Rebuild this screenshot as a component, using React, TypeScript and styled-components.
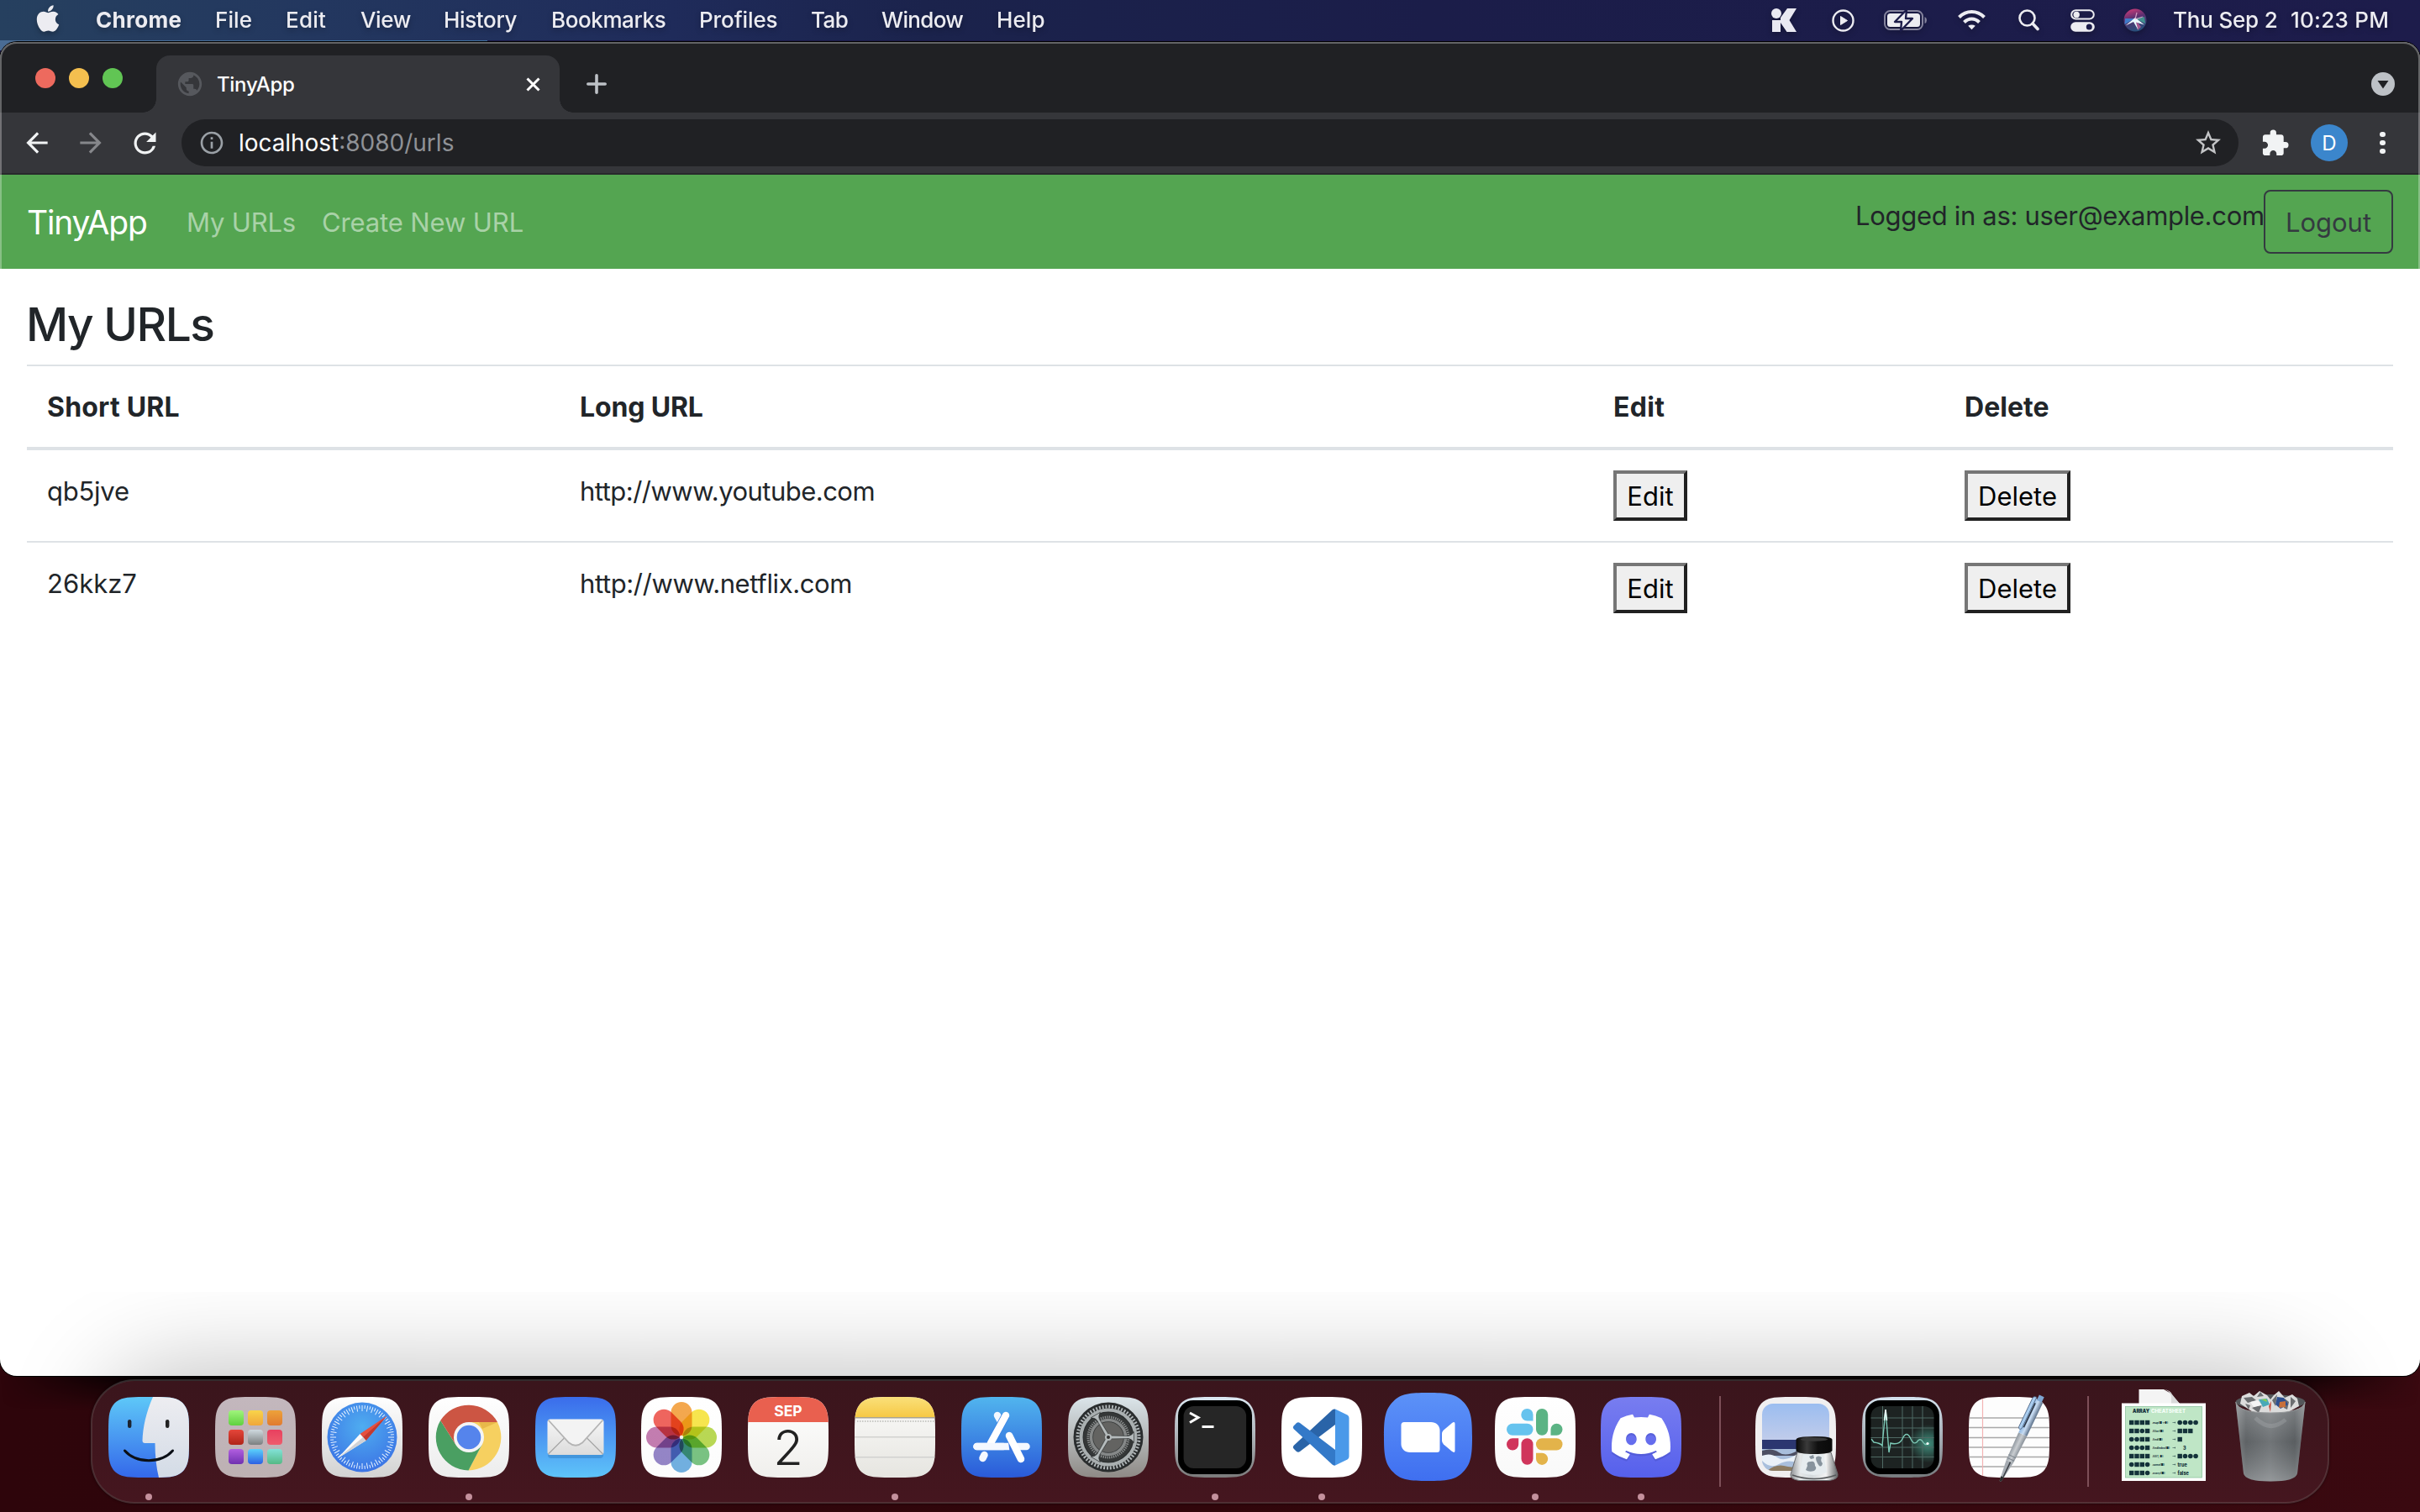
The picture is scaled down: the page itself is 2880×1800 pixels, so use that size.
import React from "react";
import styled, { createGlobalStyle, css } from "styled-components";
import { FaApple } from "react-icons/fa";
import { SiDiscord } from "react-icons/si";
import {
  MdArrowBack,
  MdArrowForward,
  MdRefresh,
  MdInfoOutline,
  MdStarBorder,
  MdExtension,
  MdPublic,
} from "react-icons/md";

const GlobalStyle = createGlobalStyle`
  *, *::before, *::after { box-sizing: border-box; }
  html, body { margin: 0; padding: 0; }
  body {
    width: 2880px;
    height: 1800px;
    overflow: hidden;
    font-family: Inter, "Liberation Sans", sans-serif;
    -webkit-font-smoothing: antialiased;
  }
`;

/* ---------- Desktop ---------- */

const Desktop = styled.div`
  width: 2880px;
  height: 1800px;
  display: flex;
  flex-direction: column;
  overflow: hidden;
  background:
    linear-gradient(90deg, #4a6c94 0, #3f6f9f 580px, transparent 580px) 0 0 / 100% 60px no-repeat,
    linear-gradient(#1d1b4a, #1d1b4a) 0 0 / 100% 100px no-repeat,
    linear-gradient(90deg, #2e050b 0%, #30060b 50%, #3a0910 100%);
`;

/* Text whose letter spacing is tuned per use */
const Label = styled.span<{ $size: number; $weight?: number; $track?: number; $color?: string }>`
  font-size: ${(p) => p.$size}px;
  font-weight: ${(p) => p.$weight ?? 400};
  letter-spacing: ${(p) => p.$track ?? 0}px;
  ${(p) => p.$color && css`color: ${p.$color};`}
  white-space: pre;
`;

/* ---------- Menu bar ---------- */

const MenuBar = styled.header`
  flex: none;
  height: 48px;
  display: flex;
  align-items: center;
  padding-left: 39px;
  color: #ececf1;
  background: linear-gradient(90deg, #26405f 0, #23375f 380px, #1f2b5a 800px, #1b234c 1100px, #1b1d49 1700px, #1d1c4b 2880px);
  svg, span { filter: drop-shadow(0 3px 3px rgba(0, 0, 0, 0.25)); }
`;

const AppleSlot = styled.div`
  width: 75px;
  height: 48px;
  display: flex;
  align-items: center;
  padding-bottom: 4px;
`;

const MenuItem = styled.div<{ $slot: number }>`
  width: ${(p) => p.$slot}px;
  height: 48px;
  padding-bottom: 1px;
  display: flex;
  align-items: center;
`;

const StatusArea = styled.div`
  margin-left: auto;
  display: flex;
  align-items: center;
`;

const StatusSlot = styled.div<{ $slot: number }>`
  width: ${(p) => p.$slot}px;
  height: 48px;
  display: flex;
  align-items: center;
  svg { display: block; overflow: visible; }
`;

const menus: { text: string; slot: number; weight?: number; track: number }[] = [
  { text: "Chrome", slot: 142, weight: 700, track: 0.3 },
  { text: "File", slot: 84, track: 0.1 },
  { text: "Edit", slot: 89, track: 0.2 },
  { text: "View", slot: 99, track: -0.4 },
  { text: "History", slot: 128, track: -0.35 },
  { text: "Bookmarks", slot: 176, track: -0.4 },
  { text: "Profiles", slot: 133, track: -0.1 },
  { text: "Tab", slot: 84, track: -0.6 },
  { text: "Window", slot: 137, track: -0.65 },
  { text: "Help", slot: 80, track: 0.1 },
];

/* ---------- Browser window ---------- */

const Window = styled.section`
  flex: none;
  position: relative;
  margin-top: 2px;
  height: 1588px;
  display: flex;
  flex-direction: column;
  border-radius: 20px;
  background: #fff;
  overflow: hidden;
  box-shadow: 0 0 0 1px #000;
  &::after {
    content: "";
    position: absolute;
    inset: 0;
    border-radius: 20px;
    border: 2px solid rgba(255, 255, 255, 0.3);
    border-bottom: 0;
    pointer-events: none;
  }
`;

const WindowShadow = styled.div`
  flex: none;
  height: 40px;
  background: linear-gradient(90deg, rgba(0,0,0,0) 0, #000 160px, #000 2700px, rgba(0,0,0,0) 2880px);
  mask-image: linear-gradient(#000, transparent);
  opacity: 0.9;
`;

const TabStrip = styled.div`
  flex: none;
  height: 84px;
  display: flex;
  align-items: flex-end;
  background: #202124;
`;

const TrafficLights = styled.div`
  width: 186px;
  height: 82px;
  padding: 0 0 0 42px;
  display: flex;
  gap: 16px;
  align-items: center;
`;

const Light = styled.i<{ $color: string }>`
  width: 24px;
  height: 24px;
  border-radius: 50%;
  background: ${(p) => p.$color};
`;

const Tab = styled.div`
  position: relative;
  width: 480px;
  height: 68px;
  padding: 0 23px;
  display: flex;
  align-items: center;
  background: #35363a;
  border-radius: 16px 16px 0 0;
  color: #fff;
  &::before, &::after {
    content: "";
    position: absolute;
    bottom: 0;
    width: 16px;
    height: 16px;
  }
  &::before { left: -16px; background: radial-gradient(circle at 0 0, transparent 15.5px, #35363a 16px); }
  &::after { right: -16px; background: radial-gradient(circle at 100% 0, transparent 15.5px, #35363a 16px); }
`;

const TabTitle = styled.div`
  flex: 1;
  padding-left: 15px;
  display: flex;
`;

const NewTab = styled.div`
  height: 68px;
  padding-left: 32px;
  display: flex;
  align-items: center;
`;

const TabSearch = styled.div`
  height: 68px;
  margin-left: auto;
  padding-right: 30px;
  display: flex;
  align-items: center;
`;

const Toolbar = styled.div`
  flex: none;
  height: 74px;
  display: flex;
  align-items: center;
  background: #35363a;
  border-bottom: 2px solid #28292c;
`;

const NavButtons = styled.div`
  width: 216px;
  padding-left: 25px;
  display: flex;
  align-items: center;
  gap: 26px;
  svg { display: block; }
`;

const AddressBar = styled.div`
  width: 2448px;
  height: 56px;
  padding: 0 18px 0 20px;
  display: flex;
  align-items: center;
  border-radius: 28px;
  background: #202124;
`;

const AddressText = styled.div`
  flex: 1;
  padding-left: 16px;
`;

const ToolbarActions = styled.div`
  flex: 1;
  display: flex;
  align-items: center;
  padding-left: 26px;
`;

const Avatar = styled.div`
  width: 44px;
  height: 44px;
  margin-left: 25px;
  display: flex;
  align-items: center;
  justify-content: center;
  border-radius: 50%;
  background: #3b86cc;
`;

const Kebab = styled.div`
  margin-left: 38px;
  display: flex;
  flex-direction: column;
  gap: 3.5px;
  i { width: 6.6px; height: 6.6px; border-radius: 50%; background: #f1f3f4; }
`;

/* ---------- Page ---------- */

const Navbar = styled.nav`
  flex: none;
  height: 112px;
  padding: 0 32px;
  display: flex;
  align-items: center;
  background: #54a551;
`;

const Brand = styled.div`
  width: 190px;
`;

const NavLink = styled.div<{ $slot: number }>`
  width: ${(p) => p.$slot}px;
`;

const Account = styled.div`
  margin-left: auto;
  width: 640px;
  height: 76px;
  display: flex;
  color: #212529;
`;

const AccountText = styled.div`
  width: 486px;
  line-height: 62px;
`;

const LogoutButton = styled.button`
  width: 154px;
  height: 76px;
  padding: 0;
  font-family: inherit;
  color: #343a40;
  background: transparent;
  border: 2px solid #343a40;
  border-radius: 8px;
`;

const Main = styled.main`
  flex: 1;
  padding: 32px;
  color: #212529;
`;

const Heading = styled.h3`
  margin: 0 0 16px -1px;
  height: 66px;
  line-height: 69px;
  font-size: 55px;
  font-weight: 500;
`;

const Table = styled.table`
  width: 2816px;
  table-layout: fixed;
  border-spacing: 0;
  border-collapse: separate;
`;

const HeadCell = styled.th<{ $width: number }>`
  width: ${(p) => p.$width}px;
  height: 102px;
  padding: 25px 24px 23px;
  font-size: 32px;
  line-height: 48px;
  text-align: left;
  vertical-align: top;
  border-top: 2px solid #dee2e6;
  border-bottom: 4px solid #dee2e6;
`;

const Cell = styled.td<{ $ruled: boolean; $action?: boolean }>`
  padding: ${(p) => (p.$action ? "24px" : "25px 24px 23px")};
  font-size: 31px;
  line-height: 48px;
  vertical-align: top;
  border-top: ${(p) => (p.$ruled ? "2px solid #dee2e6" : "0")};
`;

const RowButton = styled.button<{ $width: number }>`
  display: block;
  width: ${(p) => p.$width}px;
  height: 60px;
  padding: 0;
  font-family: inherit;
  color: #000;
  background: #efefef;
  border: 4px solid;
  border-color: #767676 #212121 #212121 #767676;
`;

/* ---------- Dock ---------- */

const Dock = styled.footer`
  flex: none;
  position: relative;
  width: 2664px;
  height: 148px;
  margin: -36px 0 0 108px;
  padding: 0 3.5px;
  display: flex;
  border-radius: 52px;
  border: 2px solid rgba(255, 255, 255, 0.17);
  background: linear-gradient(#3a151c, #45161f);
  background-clip: padding-box;
  background-color: #3a141b;
  box-shadow: 0 0 3px rgba(0, 0, 0, 0.5);
`;

/* Soft shade the dock casts on the page above it */
const DockShade = styled.div`
  position: absolute;
  left: 0;
  bottom: 0;
  width: 2880px;
  height: 100px;
  overflow: hidden;
  pointer-events: none;
  &::before {
    content: "";
    position: absolute;
    left: 140px;
    right: 140px;
    top: 108px;
    height: 140px;
    border-radius: 60px;
    box-shadow: 0 0 120px 12px rgba(0, 0, 0, 0.27);
  }
`;

const DockItem = styled.div`
  position: relative;
  width: 126.9px;
  height: 144px;
  padding-top: 19px;
  display: flex;
  flex-direction: column;
  align-items: center;
  svg { display: block; flex: none; overflow: visible; }
`;

const RunningDot = styled.i`
  position: absolute;
  bottom: 2px;
  width: 8px;
  height: 8px;
  border-radius: 50%;
  background: #c4919d;
`;

const Divider = styled.div`
  width: 57px;
  height: 126px;
  padding: 18px 0 0 29px;
  &::before {
    content: "";
    display: block;
    width: 2px;
    height: 108px;
    background: #7d4f58;
  }
`;

/* Icons taller than the grid tile rise above its top edge */
const Lifted = styled.div<{ $by: number }>`
  margin-top: -${(p) => p.$by}px;
  display: flex;
`;

/* ---------- Dock icons ---------- */

const Squircle =
  "M48 0C66 0 76 0 83 3.5C89 6.500 92 11 94 17C96 23 96 33 96 48C96 63 96 73 94 79C92 85 89 89.500 83 92.500C76 96 66 96 48 96C30 96 20 96 13 92.500C7 89.500 4 85 2 79C0 73 0 63 0 48C0 33 0 23 2 17C4 11 7 6.500 13 3.500C20 0 30 0 48 0Z";

type TileProps = { id: string; from: string; to: string; children?: React.ReactNode };

const Tile = ({ id, from, to, children }: TileProps) => (
  <svg width="96" height="96" viewBox="0 0 96 96">
    <defs>
      <linearGradient id={`${id}-bg`} x1="0" y1="0" x2="0" y2="1">
        <stop offset="0" stopColor={from} />
        <stop offset="1" stopColor={to} />
      </linearGradient>
      <clipPath id={`${id}-clip`}>
        <path d={Squircle} />
      </clipPath>
    </defs>
    <g clipPath={`url(#${id}-clip)`}>
      <rect width="96" height="96" fill={`url(#${id}-bg)`} />
      {children}
    </g>
  </svg>
);

const FinderIcon = () => (
  <Tile id="finder" from="#5ec8f8" to="#3468ea">
    <linearGradient id="finder-r" x1="0" y1="0" x2="0" y2="1">
      <stop offset="0" stopColor="#ededf1" />
      <stop offset="1" stopColor="#d3dbe6" />
    </linearGradient>
    <path d="M53 0C45 18 41 36 40.500 52Q40.500 55 43.500 55H55.500C55.500 70 57 84 60 96H96V0Z" fill="url(#finder-r)" />
    <rect x="23" y="27" width="4.400" height="10" rx="2.200" fill="#1c2430" />
    <rect x="68" y="27" width="4.400" height="10" rx="2.200" fill="#222" />
    <path d="M19.500 64C33 79.500 63 79.500 76.500 64" fill="none" stroke="#0b0f16" strokeWidth="3" strokeLinecap="round" />
  </Tile>
);

const launchColors = [
  ["#a0f47c", "#5fd13f"], ["#f8d44a", "#f0a63a"], ["#eda23a", "#e07a30"],
  ["#e5463a", "#b02318"], ["#cfdadf", "#7b7f80"], ["#e8405f", "#ee5c6c"],
  ["#b25fe0", "#7030b0"], ["#5ad2fb", "#2c5fe4"], ["#82e2d8", "#55b985"],
];

const LaunchpadIcon = () => (
  <Tile id="launch" from="#c3b7bd" to="#bdb1b3">
    {launchColors.map(([a, b], i) => (
      <g key={i}>
        <linearGradient id={`launch-${i}`} x1="0" y1="0" x2="0" y2="1">
          <stop offset="0" stopColor={a} />
          <stop offset="1" stopColor={b} />
        </linearGradient>
        <rect x={16 + (i % 3) * 23} y={16 + Math.floor(i / 3) * 23} width="18" height="18" rx="4" fill={`url(#launch-${i})`} />
      </g>
    ))}
  </Tile>
);

const SafariIcon = () => (
  <Tile id="safari" from="#ffffff" to="#d2d2d2">
    <radialGradient id="safari-d" cx="0.5" cy="0.35" r="0.7">
      <stop offset="0" stopColor="#4fadf0" />
      <stop offset="1" stopColor="#3a70e4" />
    </radialGradient>
    <circle cx="48" cy="48" r="41.500" fill="url(#safari-d)" />
    {Array.from({ length: 72 }, (_, i) => (
      <line key={i} x1="48" y1="10" x2="48" y2={i % 2 ? 14 : 17} stroke="#e8f3ff" strokeWidth="1" transform={`rotate(${i * 5} 48 48)`} />
    ))}
    <path d="M77.500 22.500L45.500 44L52.500 52Z" fill="#e5503f" />
    <path d="M77.500 22.500L49 48L52.500 52Z" fill="#c23a30" />
    <path d="M19 73L45.500 44L52.500 52Z" fill="#fbfbfb" />
    <path d="M19 73L49 48L52.500 52Z" fill="#d0d2d6" />
  </Tile>
);

const ChromeIcon = () => (
  <Tile id="chrome" from="#ffffff" to="#ececec">
    <path d="M48 48L14.200 28A39.500 39.500 0 0 1 82 30H48Z" fill="#cc5543" />
    <path d="M48 30H82A39.500 39.500 0 0 1 47.500 87.500L63.500 57Z" fill="#f6d060" />
    <path d="M14.200 28A39.500 39.500 0 0 0 47.500 87.500L63.500 57L32.500 57Z" fill="#4a9f62" />
    <path d="M14.200 28L32.500 57L40 40L48 30Z" fill="#cc5543" />
    <path d="M60 30H82L64 38Z" fill="#e0a93c" opacity=".6" />
    <circle cx="48" cy="48" r="18" fill="#f5f5f5" />
    <circle cx="48" cy="48" r="14.300" fill="#5584ec" />
  </Tile>
);

const MailIcon = () => (
  <Tile id="mail" from="#3a6ceb" to="#5ec4f9">
    <linearGradient id="mail-e" x1="0" y1="0" x2="0" y2="1">
      <stop offset="0" stopColor="#f6f6f6" />
      <stop offset="1" stopColor="#dcdcdc" />
    </linearGradient>
    <rect x="15" y="30" width="66" height="43" rx="4" fill="#2f7fc4" opacity=".5" />
    <rect x="14.500" y="26.500" width="67" height="42.500" rx="3.500" fill="url(#mail-e)" />
    <path d="M15.500 68L34.500 49M80.500 68L61.500 49" stroke="#a5a5a5" strokeWidth="1.200" />
    <path d="M15.500 27.500L40 54.500Q48 61 56 54.500L80.500 27.500" fill="#f3f3f3" stroke="#b4b4b4" strokeWidth="1.800" />
  </Tile>
);

const petals = ["#f3a13f", "#f7e43f", "#b4d645", "#6fbf78", "#66abe0", "#8c7cc4", "#bf72aa", "#ee5850"];

const Petal = styled.rect`
  mix-blend-mode: multiply;
`;

const PhotosIcon = () => (
  <Tile id="photos" from="#ffffff" to="#fcfcfc">
    {petals.map((c, i) => (
      <Petal key={c} x="35.500" y="6" width="25" height="40.500" rx="12.500" fill={c} opacity=".92" transform={`rotate(${i * 45} 48 48)`} />
    ))}
    <circle cx="48" cy="48" r="2.200" fill="#f3ede0" />
  </Tile>
);

const CalendarIcon = () => (
  <Tile id="cal" from="#ffffff" to="#f0efec">
    <rect width="96" height="30" fill="#e9604f" />
    <text x="48" y="22.800" textAnchor="middle" fontSize="17.500" fontWeight="700" fill="#fff">SEP</text>
    <text x="48" y="80.500" textAnchor="middle" fontSize="58" fontWeight="300" fill="#222">2</text>
  </Tile>
);

const NotesIcon = () => (
  <Tile id="notes" from="#fbfbfa" to="#e6e5e0">
    <linearGradient id="notes-y" x1="0" y1="0" x2="0" y2="1">
      <stop offset="0" stopColor="#fae07a" />
      <stop offset="1" stopColor="#f6c844" />
    </linearGradient>
    <rect width="96" height="24.500" fill="url(#notes-y)" />
    <rect y="24" width="96" height="1.500" fill="#aaa48f" />
    <line x1="3" x2="96" y1="29" y2="29" stroke="#b9b9b6" strokeWidth="1.500" strokeDasharray="1.500 1.500" />
    <rect y="47" width="96" height="1.500" fill="#d2d2d0" />
    <rect y="71" width="96" height="1.500" fill="#d2d2d0" />
  </Tile>
);

const AppStoreIcon = () => (
  <Tile id="store" from="#51b5ee" to="#2a5ad9">
    <g stroke="#f4f8ff" strokeWidth="8.500" strokeLinecap="round">
      <line x1="43" y1="22" x2="48" y2="31" />
      <line x1="18.500" y1="59" x2="77.500" y2="59" />
      <line x1="27.500" y1="69" x2="25.500" y2="73" />
    </g>
    <path d="M55.500 50L65 68L58 68Z" fill="#3a77e2" />
    <line x1="57" y1="46" x2="71" y2="74" stroke="#fff" strokeWidth="8.500" strokeLinecap="round" />
    <line x1="53" y1="22" x2="35" y2="55" stroke="#3d86e6" strokeWidth="10" />
    <line x1="53" y1="22" x2="35" y2="55" stroke="#fff" strokeWidth="8.500" strokeLinecap="round" />
    <line x1="18.500" y1="59" x2="50" y2="59" stroke="#f4f8ff" strokeWidth="8.500" strokeLinecap="round" />
  </Tile>
);

const SettingsIcon = () => (
  <Tile id="set" from="#dbe5ea" to="#8e8a86">
    <circle cx="48" cy="48" r="41.500" fill="#2a2d2e" />
    <circle cx="48" cy="48" r="36.500" fill="none" stroke="#b0b6b8" strokeWidth="4" strokeDasharray="1.900 1.922" />
    <circle cx="48" cy="48" r="32.500" fill="none" stroke="#a9afb0" strokeWidth="4" />
    <circle cx="48" cy="48" r="29.500" fill="#343737" />
    <circle cx="48" cy="48" r="24" fill="none" stroke="#8d9090" strokeWidth="3" strokeDasharray="1.300 1.213" />
    <circle cx="48" cy="48" r="20.500" fill="none" stroke="#858888" strokeWidth="3.500" />
    <circle cx="48" cy="48" r="18" fill="#636361" />
    {[0, 120, 240].map((a) => (
      <path key={a} d="M48 46L72 46.500Q76 46 78.500 41.500V54.500Q76 50 72 49.500L48 50Z" fill="#b4babb" stroke="#2d3030" strokeWidth=".6" transform={`rotate(${a} 48 48)`} />
    ))}
    <circle cx="48" cy="48" r="4" fill="#b4babb" />
    <circle cx="48" cy="48" r="2" fill="#333" />
  </Tile>
);

const TerminalIcon = () => (
  <Tile id="term" from="#dce8f2" to="#7b7b7b">
    <rect x="4" y="4" width="88" height="88" rx="18" fill="#000" />
    <rect x="10.600" y="11" width="74.500" height="74" rx="12" fill="#262626" />
    <path d="M18 19L28 24.500L18 30.500" fill="none" stroke="#fff" strokeWidth="3" />
    <rect x="32.500" y="34" width="14" height="3" fill="#fff" />
  </Tile>
);

const CodeIcon = () => (
  <Tile id="code" from="#ffffff" to="#ffffff">
    <path d="M14.500 58Q13 60 14.500 61.500L18 65Q20 66.500 22 65L64 33V14.500Q62 14 60.500 15.500Z" fill="#2a64a8" />
    <path d="M14.500 38Q13 36 14.500 34.500L18 31Q20 29.500 22 31L64 63V81.500Q62 82 60.500 80.500Z" fill="#3379c8" />
    <path d="M64 14.500L78.500 21.500Q80.500 22.500 80.500 25V71Q80.500 73.500 78.500 74.500L64 81.500Z" fill="#4a99e9" />
  </Tile>
);

const ZoomIcon = () => (
  <svg width="105" height="105" viewBox="0 0 105 105">
    <linearGradient id="zoom-bg" x1="0" y1="0" x2="0" y2="1">
      <stop offset="0" stopColor="#5c92f8" />
      <stop offset="1" stopColor="#3f6ff0" />
    </linearGradient>
    <path d="M52.500 0C74 0 85 1 94 10.500C104 20 105 32 105 52.500C105 73 104 85 94 94.500C85 104 74 105 52.500 105C31 105 20 104 11 94.500C1 85 0 73 0 52.500C0 32 1 20 11 10.500C20 1 31 0 52.500 0Z" fill="url(#zoom-bg)" />
    <path d="M24 35H56C62 35 66.500 39 66.500 45V67.500Q66.500 71 63 71H31C25 71 20.500 67 20.500 61V38.500Q20.500 35 24 35Z" fill="#fff" />
    <path d="M69 49Q69 46.500 71 44.500L80.500 36.500Q84.500 33.500 84.500 37V69Q84.500 72.500 80.500 69.500L71 61.500Q69 59.500 69 57Z" fill="#fff" />
  </svg>
);

const SlackIcon = () => (
  <Tile id="slack" from="#ffffff" to="#f9f9f9">
    <path d="M38.500 14A7 7 0 0 1 45.500 21V28.500H38.500A7.200 7.200 0 0 1 38.500 14Z" fill="#66c3ee" />
    <rect x="14" y="31.700" width="31.500" height="14" rx="7" fill="#66c3ee" />
    <rect x="49" y="14" width="14.200" height="31.700" rx="7" fill="#5bb384" />
    <path d="M80.500 38.700A7 7 0 0 1 73.500 45.700H66.500V38.700A7 7 0 0 1 80.500 38.700Z" fill="#5bb384" />
    <path d="M28.200 49.300V56.500A7.100 7.100 0 1 1 21 49.300Z" fill="#d0355b" />
    <rect x="31.500" y="49.300" width="14" height="31.500" rx="7" fill="#d0355b" />
    <rect x="49" y="49.300" width="31.500" height="14.300" rx="7" fill="#e3b34a" />
    <path d="M49 66.700H56A7.100 7.100 0 1 1 49 73.800Z" fill="#e3b34a" />
  </Tile>
);

const DiscordIcon = () => (
  <Tile id="disc" from="#787df0" to="#5660ec">
    <SiDiscord x="13" y="15" size={70} color="#3f47b8" opacity={0.35} />
    <SiDiscord x="13" y="12.500" size={70} color="#ffffff" />
  </Tile>
);

const PreviewIcon = () => (
  <svg width="96" height="96" viewBox="0 0 96 96">
    <defs>
      <clipPath id="pv"><rect x="8" y="8" width="80" height="80" rx="13" /></clipPath>
      <linearGradient id="pv-sky" x1="0" y1="0" x2="0" y2="1">
        <stop offset="0" stopColor="#9bbdf0" />
        <stop offset="1" stopColor="#c3cdea" />
      </linearGradient>
      <linearGradient id="pv-glass" x1="0" y1="0" x2="1" y2="0">
        <stop offset="0" stopColor="#8d9093" />
        <stop offset=".2" stopColor="#e4e7e8" />
        <stop offset=".45" stopColor="#d3d9dc" />
        <stop offset=".75" stopColor="#f3f3f3" />
        <stop offset="1" stopColor="#606365" />
      </linearGradient>
      <linearGradient id="pv-cap" x1="0" y1="0" x2="1" y2="0">
        <stop offset="0" stopColor="#090909" />
        <stop offset=".3" stopColor="#3a3a3a" />
        <stop offset=".6" stopColor="#101010" />
        <stop offset="1" stopColor="#0a0a0a" />
      </linearGradient>
    </defs>
    <path d={Squircle} fill="#f0eff0" />
    <g clipPath="url(#pv)">
      <rect x="8" y="8" width="80" height="46" fill="url(#pv-sky)" />
      <rect x="8" y="51" width="80" height="14" fill="#2b3670" />
      <rect x="8" y="62" width="80" height="26" fill="#a9bfdc" />
      <path d="M8 64Q20 60 28 66T50 64V70H8Z" fill="#4d4f62" />
      <path d="M8 70Q18 66 26 72T50 68V78Q38 74 28 80T8 76Z" fill="#eaf1f8" />
      <path d="M14 88Q24 80 34 82T50 84V88Z" fill="#8d7c62" />
    </g>
    <path d="M50 66L42 92Q41 98 52 99.500H88Q99 98 98 92L90 66Z" fill="url(#pv-glass)" stroke="#6b6d70" strokeWidth="1" />
    <path d="M57 68L53 90Q70 96 85 90L81 68Z" fill="#e6ecef" />
    <path d="M62 82Q60 77 66 77Q71 76 71 82Q74 85 70 88Q64 90 60 87ZM72 72Q75 69 79 72Q77 76 80 79Q79 84 76 82Q72 77 72 72ZM64 71L69 69L70 73L66 74Z" fill="#87939d" />
    <path d="M44 93Q70 102 96 93" stroke="#55585a" strokeWidth="1.500" fill="none" />
    <path d="M48.500 51Q48.500 47 70 47T91.500 51V64Q89 68 70 68T48.500 64Z" fill="url(#pv-cap)" />
    <ellipse cx="70" cy="50.500" rx="16" ry="2.200" fill="#3a3a3a" />
  </svg>
);

const ActivityIcon = () => (
  <Tile id="act" from="#d4e2ee" to="#777b7e">
    <rect x="4" y="4" width="88" height="88" rx="18" fill="#000" />
    <clipPath id="act-s"><rect x="10.500" y="11" width="75" height="74" rx="12" /></clipPath>
    <radialGradient id="act-g" cx="0.9" cy="0.6" r="0.3">
      <stop offset="0" stopColor="#3f8f7d" />
      <stop offset="1" stopColor="#3f8f7d" stopOpacity="0" />
    </radialGradient>
    <g clipPath="url(#act-s)">
      <rect x="10" y="10" width="76" height="76" fill="#1d2322" />
      <rect x="10" y="10" width="76" height="76" fill="url(#act-g)" />
      <path d="M24.500 10V86M48 10V86M60 10V86M72 10V86M10 25H86M10 37H86M10 48.500H86M10 60H86M10 71.500H86" stroke="#4f6a64" strokeWidth="1" />
      <path d="M11 50L14 54Q22 55 24 58L28 15L32 66L34 55Q44 58 48 50Q53 39 58 50Q61 57 65 54Q69 48 72 53T78 56" fill="none" stroke="#7cc9b6" strokeWidth="1.400" />
      <path d="M26.500 28L28 15L29.500 28" fill="none" stroke="#e8fffa" strokeWidth="1.600" />
      <circle cx="78" cy="55.500" r="1.600" fill="#fff" />
    </g>
  </Tile>
);

const TextEditIcon = () => (
  <svg width="96" height="96" viewBox="0 0 96 96">
    <defs>
      <linearGradient id="te-barrel" x1="0" y1="0" x2="1" y2="0">
        <stop offset="0" stopColor="#8fb8e4" />
        <stop offset=".5" stopColor="#c8dcf2" />
        <stop offset="1" stopColor="#5b6f88" />
      </linearGradient>
      <linearGradient id="te-grip" x1="0" y1="0" x2="1" y2="0">
        <stop offset="0" stopColor="#8f979f" />
        <stop offset=".5" stopColor="#c9cdd1" />
        <stop offset="1" stopColor="#868e96" />
      </linearGradient>
      <clipPath id="te-c"><path d={Squircle} /></clipPath>
    </defs>
    <path d={Squircle} fill="#fdfdfd" />
    <g clipPath="url(#te-c)">
      <path d="M0 25H96M0 36.500H96M0 48.500H96M0 60H96M0 71.500H96M0 83H96" stroke="#a9a9a9" strokeWidth="1.400" />
      <path d="M16.500 0V96" stroke="#f3b4b4" strokeWidth="1.200" />
    </g>
    <g transform="translate(37.500 100.500) rotate(25.500)">
      <path d="M-1 0L-4.500 -26H4.500L1 0Z" fill="#a5abb2" />
      <path d="M-1 0L-2 -6H2L1 0Z" fill="#2a2a2a" />
      <path d="M1 -6V-26" stroke="#3c4046" strokeWidth="1.600" />
      <path d="M-4.500 -26L-5.500 -62H5.500L4.500 -26Z" fill="url(#te-grip)" />
      <path d="M-4.600 -29H4.600M-4.800 -33H4.800" stroke="#7d858e" strokeWidth="1" />
      <path d="M-5.500 -62V-106Q0 -109 5.500 -106V-62Z" fill="url(#te-barrel)" />
      <path d="M-2.500 -106V-113H4V-106Z" fill="#7ea6d2" />
      <path d="M-8 -68V-106Q-8 -109 -4 -109V-68Q-6 -64 -8 -68Z" fill="#a9cdf0" stroke="#4b6483" strokeWidth=".8" />
      <path d="M-2.500 -102V-70" stroke="#2b3442" strokeWidth="1.600" />
    </g>
  </svg>
);

type SheetRow = { left: string; call: string; right?: string; word?: string };
const sheetRows: SheetRow[] = [
  { left: "ssss", call: ".map(■→●)", right: "cccc" },
  { left: "sscs", call: ".filter(■)", right: "sss" },
  { left: "ccss", call: ".find(■)", right: "s" },
  { left: "cccs", call: ".findIndex(■)", word: "3" },
  { left: "ssss", call: ".fill(1, ●)", right: "sccc" },
  { left: "cssc", call: ".some(■)", word: "true" },
  { left: "sssc", call: ".every(■)", word: "false" },
];

const Marks = ({ kinds, x, y }: { kinds: string; x: number; y: number }) => (
  <>
    {kinds.split("").map((k, i) =>
      k === "s" ? (
        <rect key={i} x={x + i * 6.3} y={y - 2.7} width="5.400" height="5.400" fill="#14323a" />
      ) : (
        <circle key={i} cx={x + 2.7 + i * 6.3} cy={y} r="2.800" fill="#14323a" />
      )
    )}
  </>
);

const CheatsheetIcon = () => (
  <svg width="100" height="110" viewBox="0 0 100 110">
    <path d="M20.500 0H50L57 4L69 17H20.500Z" fill="#f4f4f4" />
    <path d="M50 0Q58 1 60 6L69 17H59V8Q57 1 50 0Z" fill="#d9d9da" />
    <rect y="16.500" width="100" height="92.500" fill="#fff" />
    <rect x="4.500" y="20.500" width="91" height="84.500" fill="#bfe6c6" stroke="#8fc3a0" strokeWidth=".8" />
    <text x="13" y="27.800" fontSize="6" fontWeight="900" fill="#12303a" textLength="20" lengthAdjust="spacingAndGlyphs">ARRAY</text>
    <text x="35" y="27.800" fontSize="6" fontWeight="800" fill="#f7fffa" textLength="41" lengthAdjust="spacingAndGlyphs">CHEATSHEET</text>
    {sheetRows.map((r, i) => {
      const y = 39.5 + i * 10;
      return (
        <g key={i}>
          <Marks kinds={r.left} x={9} y={y} />
          <text x="36" y={y + 1.2} fontSize="3.200" fontWeight="700" fill="#14323a">{r.call}</text>
          <path d={`M60.500 ${y}h3.500m-1 -.9l1 .9l-1 .9`} stroke="#14323a" strokeWidth=".5" fill="none" />
          {r.right && <Marks kinds={r.right} x={66.5} y={y} />}
          {r.word && <text x={r.word === "3" ? 73 : 66.5} y={y + 2} fontSize="5.500" fontWeight="800" fill="#14323a">{r.word}</text>}
        </g>
      );
    })}
  </svg>
);

const TrashIcon = () => (
  <svg width="84" height="110" viewBox="0 0 84 110">
    <defs>
      <linearGradient id="bin" x1="0" y1="0" x2="1" y2="0">
        <stop offset="0" stopColor="#8e9194" />
        <stop offset=".15" stopColor="#63676a" />
        <stop offset=".5" stopColor="#7c8083" />
        <stop offset=".85" stopColor="#5c6063" />
        <stop offset="1" stopColor="#8a8d90" />
      </linearGradient>
      <linearGradient id="bin-v" x1="0" y1="0" x2="0" y2="1">
        <stop offset="0" stopColor="#c9ccce" stopOpacity=".35" />
        <stop offset=".5" stopColor="#55595c" stopOpacity=".3" />
        <stop offset="1" stopColor="#b4b7b9" stopOpacity=".45" />
      </linearGradient>
    </defs>
    <ellipse cx="42" cy="15" rx="41.500" ry="9" fill="#54575a" />
    <path d="M6 17L8 8L17 4L22 8L29 2L38 7L42 12L46 7L52 2L59 10L68 6L74 11L76 20L60 29H24Z" fill="#dcdcdc" />
    <path d="M10 10L20 9L25 13L15 16ZM20 22L32 18L28 28ZM44 13L50 6L48 20ZM66 9L72 14L66 22ZM12 17L18 19L16 24ZM59 11L64 15L62 24L58 22ZM30 3L34 8L26 9Z" fill="#6c6e71" />
    <path d="M28 12L38 11L41 18L33 21Z" fill="#48a9b8" />
    <path d="M31 12L37 11.500L38 15Z" fill="#8fcf4a" />
    <path d="M50 9L58 10L63 18L54 23L48 18Z" fill="#2f4f8f" />
    <path d="M53 15L60 14L60 21L52 22Z" fill="#c8703a" />
    <path d="M40 20L43 14L42 27Z" fill="#c84a3a" />
    <path d="M18 15L27 13L32 19L22 21Z" fill="#f4f4f4" />
    <path d="M.5 15Q4 28 42 28T83.500 15L74 100Q72 109.500 42 109.500T10 100Z" fill="url(#bin)" />
    <path d="M.5 15Q4 28 42 28T83.500 15L74 100Q72 109.500 42 109.500T10 100Z" fill="url(#bin-v)" />
    <path d="M24 34Q42 52 60 36" stroke="#b0b4b6" strokeOpacity=".3" strokeWidth="5" fill="none" />
    <path d="M.7 15Q4 28 42 28T83.300 15" stroke="#96999b" strokeWidth="1" fill="none" />
  </svg>
);

const apps: { icon: React.ReactNode; running?: boolean }[] = [
  { icon: <FinderIcon />, running: true },
  { icon: <LaunchpadIcon /> },
  { icon: <SafariIcon /> },
  { icon: <ChromeIcon />, running: true },
  { icon: <MailIcon /> },
  { icon: <PhotosIcon /> },
  { icon: <CalendarIcon /> },
  { icon: <NotesIcon />, running: true },
  { icon: <AppStoreIcon /> },
  { icon: <SettingsIcon /> },
  { icon: <TerminalIcon />, running: true },
  { icon: <CodeIcon />, running: true },
  { icon: <Lifted $by={5}><ZoomIcon /></Lifted> },
  { icon: <SlackIcon />, running: true },
  { icon: <DiscordIcon />, running: true },
];

const rows = [
  { id: "qb5jve", url: "http://www.youtube.com", idTrack: -0.25, urlTrack: -0.52 },
  { id: "26kkz7", url: "http://www.netflix.com", idTrack: 0, urlTrack: -0.38 },
];

export default function App() {
  return (
    <>
      <GlobalStyle />
      <Desktop>
        <MenuBar>
          <AppleSlot><FaApple size={36} /></AppleSlot>
          {menus.map((m) => (
            <MenuItem key={m.text} $slot={m.slot}>
              <Label $size={26} $weight={m.weight ?? 500} $track={m.track}>{m.text}</Label>
            </MenuItem>
          ))}
          <StatusArea>
            <StatusSlot $slot={72}>
              <svg width="31" height="28" viewBox="0 0 31 28" fill="#e9e9f2">
                <circle cx="6" cy="6" r="6" />
                <path d="M1 14H11V28H1ZM19 0H30L21.500 14L30 28H18.500L11 17V11Z" />
              </svg>
            </StatusSlot>
            <StatusSlot $slot={62}>
              <svg width="27" height="27" viewBox="0 0 27 27">
                <circle cx="13.500" cy="13.500" r="12" fill="none" stroke="#ececf1" strokeWidth="2.400" />
                <path d="M10.500 8.500L18.500 13.500L10.500 18.500Z" fill="#ececf1" stroke="#ececf1" strokeLinejoin="round" />
              </svg>
            </StatusSlot>
            <StatusSlot $slot={88}>
              <svg width="52" height="26" viewBox="0 0 52 26">
                <rect x="1" y="2" width="45" height="22" rx="6.500" fill="none" stroke="#84839d" strokeWidth="2" />
                <path d="M48.500 9Q51 10 51 13T48.500 17Z" fill="#84839d" />
                <rect x="4" y="5" width="39" height="16" rx="3.500" fill="#ececf1" />
                <path d="M27 .5L13 15H21L20 25.500L34 11H26Z" fill="#ececf1" stroke="#1c1c4a" strokeWidth="2.400" strokeLinejoin="round" />
              </svg>
            </StatusSlot>
            <StatusSlot $slot={72}>
              <svg width="33" height="26" viewBox="0 0 33 26" fill="none" stroke="#ececf1" strokeWidth="4">
                <path d="M1.500 9.500Q8 3 16.500 3T31.500 9.500" />
                <path d="M7.500 15.500Q11.500 11.500 16.500 11.500T25.500 15.500" />
                <path d="M12.200 19.800Q14 18.400 16.500 18.400T20.800 19.800L16.500 24.300Z" fill="#ececf1" stroke="none" />
              </svg>
            </StatusSlot>
            <StatusSlot $slot={62}>
              <svg width="25" height="26" viewBox="0 0 25 26" fill="none" stroke="#ececf1">
                <circle cx="10.500" cy="10.500" r="9" strokeWidth="2.600" />
                <path d="M17 17L23 23.500" strokeWidth="3.600" strokeLinecap="round" />
              </svg>
            </StatusSlot>
            <StatusSlot $slot={63}>
              <svg width="29" height="27" viewBox="0 0 29 27">
                <rect x="1.200" y="1.200" width="26.600" height="10.400" rx="5.200" fill="none" stroke="#ececf1" strokeWidth="2" />
                <circle cx="7.200" cy="6.400" r="3.700" fill="#ececf1" />
                <rect x=".2" y="15.200" width="28.600" height="11.600" rx="5.800" fill="#ececf1" />
                <circle cx="22.300" cy="21" r="3.500" fill="#1c1c4a" />
              </svg>
            </StatusSlot>
            <StatusSlot $slot={59}>
              <svg width="28" height="28" viewBox="0 0 28 28">
                <defs>
                  <linearGradient id="siri" x1=".3" y1="0" x2=".6" y2="1">
                    <stop offset="0" stopColor="#c93b78" />
                    <stop offset=".4" stopColor="#5a2f70" />
                    <stop offset="1" stopColor="#24527c" />
                  </linearGradient>
                </defs>
                <circle cx="14" cy="14" r="13.500" fill="url(#siri)" />
                <path d="M14 12L1.500 19L2 12Z" fill="#3a8fe0" opacity=".8" />
                <path d="M14 12L26 18L25 10Z" fill="#3fb59a" opacity=".7" />
                <path d="M14 13L17 26L21 22Z" fill="#d0609a" opacity=".7" />
                <path d="M2.500 20.500L14 11L25 19.500L15 16.500L17.500 25.500L12 16Z" fill="#eafaff" />
                <path d="M14 13L16 5M14 13L23 10" stroke="#e9b8d8" strokeWidth="1.200" opacity=".8" />
              </svg>
            </StatusSlot>
            <MenuItem $slot={140}><Label $size={26} $weight={500} $track={-0.2}>Thu Sep 2</Label></MenuItem>
            <MenuItem $slot={154}><Label $size={26} $weight={500} $track={0.25}>10:23 PM</Label></MenuItem>
          </StatusArea>
        </MenuBar>

        <Window>
          <TabStrip>
            <TrafficLights>
              <Light $color="#ed6a5e" />
              <Light $color="#f4bf4f" />
              <Light $color="#61c554" />
            </TrafficLights>
            <Tab>
              <MdPublic size={34} color="#56585d" />
              <TabTitle><Label $size={24} $weight={500} $track={-0.3}>TinyApp</Label></TabTitle>
              <svg width="17" height="17" viewBox="0 0 17 17" stroke="#fff" strokeWidth="3"><path d="M1.500 1.500L15.500 15.500M15.500 1.500L1.500 15.500" /></svg>
            </Tab>
            <NewTab>
              <svg width="24" height="24" viewBox="0 0 24 24" stroke="#bdc1c6" strokeWidth="3.600" strokeLinecap="round"><path d="M12 1.800V22.200M1.800 12H22.200" /></svg>
            </NewTab>
            <TabSearch>
              <svg width="28" height="28" viewBox="0 0 28 28"><circle cx="14" cy="14" r="14" fill="#bdc1c6" /><path d="M7.500 10H20.500L14 19.500Z" fill="#202124" /></svg>
            </TabSearch>
          </TabStrip>
          <Toolbar>
            <NavButtons>
              <MdArrowBack size={38} color="#f1f3f4" />
              <MdArrowForward size={38} color="#86878b" />
              <MdRefresh size={39} color="#f1f3f4" />
            </NavButtons>
            <AddressBar>
              <MdInfoOutline size={32} color="#9aa0a6" />
              <AddressText>
                <Label $size={28} $color="#fff" $track={-0.05}>localhost</Label>
                <Label $size={28} $color="#8f9196">:8080/urls</Label>
              </AddressText>
              <MdStarBorder size={36} color="#c3c4c6" />
            </AddressBar>
            <ToolbarActions>
              <MdExtension size={35} color="#f1f3f4" />
              <Avatar><Label $size={24} $color="#fff">D</Label></Avatar>
              <Kebab><i /><i /><i /></Kebab>
            </ToolbarActions>
          </Toolbar>
          <Navbar>
            <Brand><Label $size={39} $color="#fff" $track={-1.2}>TinyApp</Label></Brand>
            <NavLink $slot={161}><Label $size={31} $color="rgba(255,255,255,.5)" $track={-0.17}>My URLs</Label></NavLink>
            <NavLink $slot={250}><Label $size={31} $color="rgba(255,255,255,.5)" $track={-0.12}>Create New URL</Label></NavLink>
            <Account>
              <AccountText><Label $size={31} $track={-0.31}>Logged in as: user@example.com</Label></AccountText>
              <LogoutButton><Label $size={31}>Logout</Label></LogoutButton>
            </Account>
          </Navbar>
          <Main>
            <Heading><Label $size={55} $weight={500} $track={-1.5}>My URLs</Label></Heading>
            <Table>
              <thead>
                <tr>
                  <HeadCell $width={634}><Label $size={32} $weight={700} $track={0.2}>Short URL</Label></HeadCell>
                  <HeadCell $width={1230}><Label $size={32} $weight={700} $track={-0.15}>Long URL</Label></HeadCell>
                  <HeadCell $width={418}><Label $size={32} $weight={700} $track={0.3}>Edit</Label></HeadCell>
                  <HeadCell $width={534}><Label $size={32} $weight={700} $track={0.05}>Delete</Label></HeadCell>
                </tr>
              </thead>
              <tbody>
                {rows.map((r, i) => (
                  <tr key={r.id}>
                    <Cell $ruled={i > 0}><Label $size={31} $track={r.idTrack}>{r.id}</Label></Cell>
                    <Cell $ruled={i > 0}><Label $size={31} $track={r.urlTrack}>{r.url}</Label></Cell>
                    <Cell $ruled={i > 0} $action><RowButton $width={88}><Label $size={31}>Edit</Label></RowButton></Cell>
                    <Cell $ruled={i > 0} $action><RowButton $width={126}><Label $size={31}>Delete</Label></RowButton></Cell>
                  </tr>
                ))}
              </tbody>
            </Table>
          </Main>
          <DockShade />
        </Window>

        <WindowShadow />
        <Dock>
          {apps.map((a, i) => (
            <DockItem key={i}>
              {a.icon}
              {a.running && <RunningDot />}
            </DockItem>
          ))}
          <Divider />
          <DockItem><PreviewIcon /></DockItem>
          <DockItem><ActivityIcon /></DockItem>
          <DockItem><TextEditIcon /></DockItem>
          <Divider />
          <DockItem><Lifted $by={9}><CheatsheetIcon /></Lifted></DockItem>
          <DockItem><Lifted $by={9}><TrashIcon /></Lifted></DockItem>
        </Dock>
      </Desktop>
    </>
  );
}
